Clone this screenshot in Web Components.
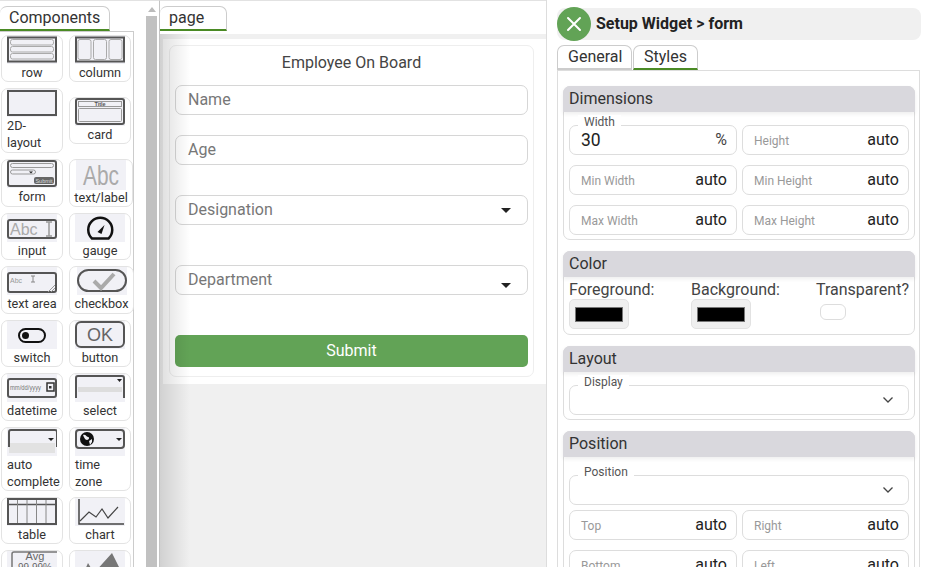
<!DOCTYPE html>
<html><head><meta charset="utf-8"><title>Setup Widget</title>
<style>
html,body{margin:0;padding:0;background:#fff}
body{width:929px;height:567px;overflow:hidden;font-family:Roboto,"Liberation Sans",sans-serif;color:#333}
svg text{font-family:"Liberation Sans",Arial,sans-serif}
</style></head><body>
<app-shell>
  <comp-palette slot="left">
    <comp-tile><svg slot="icon" width="50" height="28" viewBox="0 0 50 28"><rect x="1" y="1.500" width="48" height="24" fill="none" stroke="#555" stroke-width="2"/><g fill="none" stroke="#aaa"><rect x="3.500" y="3.500" width="43" height="5.500" rx="2"/><rect x="3.500" y="10.500" width="43" height="5.500" rx="2"/><rect x="3.500" y="17.500" width="43" height="5.500" rx="2"/></g></svg>row</comp-tile>
    <comp-tile><svg slot="icon" width="50" height="28" viewBox="0 0 50 28"><rect x="1" y="1.500" width="48" height="24" fill="none" stroke="#555" stroke-width="2"/><g fill="none" stroke="#aaa"><rect x="3" y="3.500" width="13" height="20" rx="2"/><rect x="18.500" y="3.500" width="13" height="20" rx="2"/><rect x="34" y="3.500" width="13" height="20" rx="2"/></g></svg>column</comp-tile>
    <comp-tile left pad><svg slot="icon" width="50" height="28" viewBox="0 0 50 28"><rect x="1" y="2" width="48" height="24" fill="none" stroke="#555" stroke-width="2"/></svg>2D-<br>layout</comp-tile>
    <comp-tile><svg slot="icon" width="50" height="28" viewBox="0 0 50 28"><rect x="1" y="1" width="48" height="25" rx="2" fill="none" stroke="#555" stroke-width="2"/><rect x="3.500" y="3.500" width="43" height="5" fill="none" stroke="#999"/><rect x="3.500" y="10.500" width="43" height="13" rx="1" fill="none" stroke="#999"/><text x="25" y="8" font-size="5.500" font-weight="700" text-anchor="middle" fill="#555">Title</text></svg>card</comp-tile>
    <comp-tile><svg slot="icon" width="50" height="28" viewBox="0 0 50 28"><rect x="1" y="1" width="48" height="25" rx="2" fill="none" stroke="#555" stroke-width="2"/><rect x="3.500" y="3.500" width="43" height="4" rx="2" fill="none" stroke="#999"/><rect x="3.500" y="10" width="25" height="4" rx="2" fill="none" stroke="#999"/><path d="M22 11.500h4l-2 2z" fill="#222"/><rect x="27" y="17" width="20" height="7" rx="2" fill="#666"/><text x="37" y="22.500" font-size="5.500" text-anchor="middle" fill="#ddd">Submit</text></svg>form</comp-tile>
    <comp-tile wide="64" abc><svg slot="icon" width="50" height="30" viewBox="0 0 50 30"><text x="25" y="25" font-size="27" text-anchor="middle" textLength="36" lengthAdjust="spacingAndGlyphs" fill="#aaa">Abc</text></svg>text/label</comp-tile>
    <comp-tile><svg slot="icon" width="50" height="28" viewBox="0 0 50 28"><rect x="1" y="6" width="48" height="18" rx="2" fill="none" stroke="#555" stroke-width="2"/><text x="3" y="21" font-size="16" fill="#aaa">Abc</text><path d="M39 8h6M39 22h6M42 8v14" stroke="#999" stroke-width="1.500" fill="none"/></svg>input</comp-tile>
    <comp-tile><svg slot="icon" width="50" height="28" viewBox="0 0 50 28"><path d="M17 24.500a12 12 0 1 1 16.500 0z" fill="none" stroke="#111" stroke-width="2.500" stroke-linejoin="round"/><path d="M22.500 18l7-7-3 9z" fill="#111"/></svg>gauge</comp-tile>
    <comp-tile><svg slot="icon" width="50" height="28" viewBox="0 0 50 28"><rect x="1" y="6" width="48" height="19" rx="2" fill="none" stroke="#555" stroke-width="2"/><text x="3" y="16" font-size="7" fill="#999">Abc</text><path d="M24 9h4M24 15h4M26 9v6" stroke="#888" fill="none"/><path d="M48 18l-7 7M48 21l-4 4" stroke="#999"/></svg>text area</comp-tile>
    <comp-tile wide="65"><svg slot="icon" width="50" height="28" viewBox="0 0 50 28"><rect x="1" y="3" width="48" height="21" rx="10.500" fill="none" stroke="#555" stroke-width="2"/><path d="M17 14l7 7 13-14" fill="none" stroke="#aaa" stroke-width="4"/></svg>checkbox</comp-tile>
    <comp-tile><svg slot="icon" width="50" height="28" viewBox="0 0 50 28"><rect x="12" y="8" width="26" height="13" rx="6.500" fill="none" stroke="#111" stroke-width="2"/><circle cx="18.500" cy="14.500" r="3.500" fill="#111"/></svg>switch</comp-tile>
    <comp-tile><svg slot="icon" width="50" height="28" viewBox="0 0 50 28"><rect x="1" y="1" width="48" height="25" rx="5" fill="none" stroke="#555" stroke-width="2"/><text x="25" y="20" font-size="18" text-anchor="middle" fill="#666">OK</text></svg>button</comp-tile>
    <comp-tile><svg slot="icon" width="50" height="28" viewBox="0 0 50 28"><rect x="1" y="5" width="48" height="18" rx="2" fill="none" stroke="#555" stroke-width="2"/><text x="3" y="16" font-size="6.500" textLength="31" lengthAdjust="spacingAndGlyphs" fill="#777">mm/dd/yyyy</text><rect x="40" y="9" width="7" height="8" fill="none" stroke="#333" stroke-width="1.500"/><rect x="42" y="12" width="2.500" height="2.500" fill="#333"/></svg>datetime</comp-tile>
    <comp-tile><svg slot="icon" width="50" height="28" viewBox="0 0 50 28"><path d="M1 24V4a2 2 0 0 1 2-2h44a2 2 0 0 1 2 2v20" fill="none" stroke="#555" stroke-width="2"/><rect x="3" y="13" width="44" height="5" fill="#ddd"/><path d="M42 5h5l-2.500 3z" fill="#222"/></svg>select</comp-tile>
    <comp-tile left><svg slot="icon" width="50" height="25" viewBox="0 0 50 25"><rect x="2" y="15" width="46" height="10" fill="#e2e2e2"/><path d="M1 19V4a2 2 0 0 1 2-2h44a2 2 0 0 1 2 2v15" fill="none" stroke="#555" stroke-width="2" transform="translate(1 0)"/><path d="M41 10h6l-3 3z" fill="#222"/></svg>auto<br>complete</comp-tile>
    <comp-tile left><svg slot="icon" width="50" height="25" viewBox="0 0 50 25"><rect x="1" y="2" width="48" height="18" rx="3" fill="none" stroke="#555" stroke-width="2"/><circle cx="12" cy="11" r="7" fill="#111"/><path d="M8 7c3-1 3 2 5 2s1 3-1 3-3-3-4-5zM14 13l3-2 0 3-2 3z" fill="#f0f0f5"/><path d="M41 10h6l-3 3z" fill="#222"/></svg>time<br>zone</comp-tile>
    <comp-tile><svg slot="icon" width="50" height="28" viewBox="0 0 50 28"><rect x="1" y="1" width="48" height="25" fill="none" stroke="#555" stroke-width="2"/><path d="M1 6.500h48" stroke="#555" stroke-width="1.500"/><path d="M10.500 2v23M20 2v23M29.500 2v23M39 2v23" stroke="#888"/></svg>table</comp-tile>
    <comp-tile><svg slot="icon" width="50" height="28" viewBox="0 0 50 28"><path d="M4 1v25h45" fill="none" stroke="#444" stroke-width="1.500"/><path d="M5 23l9-9 7 5 6-8 6 9 10-11" fill="none" stroke="#444" stroke-width="1.200"/></svg>chart</comp-tile>
    <comp-tile><svg slot="icon" width="50" height="28" viewBox="0 0 50 28"><rect x="5" y="1" width="48" height="27" rx="2" fill="none" stroke="#777" stroke-width="1.500"/><text x="28" y="9" font-size="11" text-anchor="middle" fill="#666">Avg</text><text x="28" y="20" font-size="10" text-anchor="middle" fill="#666">99.99%</text></svg></comp-tile>
    <comp-tile><svg slot="icon" width="50" height="28" viewBox="0 0 50 28"><path d="M6 28L13 12l6 10L37 2 50 28z" fill="#777"/></svg></comp-tile>
  </comp-palette>
  <form-canvas slot="mid">
    <form-field>Name</form-field>
    <form-field gap="20">Age</form-field>
    <form-field gap="30" arrow="mid">Designation</form-field>
    <form-field gap="40" arrow="low">Department</form-field>
    <submit-button>Submit</submit-button>
  </form-canvas>
  <setup-panel slot="right">
    <setup-section title="Dimensions">
      <dim-grid>
        <dim-field legend="Width" value="30" unit="%"></dim-field><dim-field label="Height" value="auto"></dim-field>
        <dim-field label="Min Width" value="auto"></dim-field><dim-field label="Min Height" value="auto"></dim-field>
        <dim-field label="Max Width" value="auto"></dim-field><dim-field label="Max Height" value="auto"></dim-field>
      </dim-grid>
    </setup-section>
    <setup-section title="Color"><color-row></color-row></setup-section>
    <setup-section title="Layout"><legend-select legend="Display"></legend-select></setup-section>
    <setup-section title="Position" extra>
      <legend-select legend="Position"></legend-select>
      <dim-grid near>
        <dim-field label="Top" value="auto"></dim-field><dim-field label="Right" value="auto"></dim-field>
        <dim-field label="Bottom" value="auto"></dim-field><dim-field label="Left" value="auto"></dim-field>
      </dim-grid>
    </setup-section>
  </setup-panel>
</app-shell>
<script>
function def(name, html){
  class E extends HTMLElement{
    constructor(){super();this.attachShadow({mode:'open'});}
    connectedCallback(){this.shadowRoot.innerHTML=typeof html==='function'?html(this):html;}
  }
  customElements.define(name,E);
}
def('app-shell',`<style>
:host{display:grid;grid-template-columns:160px 386px 1fr;width:929px;height:567px;overflow:hidden}
</style><slot name="left"></slot><slot name="mid"></slot><slot name="right"></slot>`);

def('tab-head',e=>`<style>
:host{display:block;box-sizing:border-box;height:25px;width:${e.getAttribute('w')}px;border:1px solid #ccc;border-left:${e.hasAttribute('flat')?'0':'1px solid #ccc'};border-bottom:2px solid ${e.hasAttribute('off')?'#ccc':'#4a8a24'};border-radius:7px 7px 0 0;font:16px/22px Roboto,sans-serif;color:#333;padding-left:${e.getAttribute('pad')}px;background:#fff}
</style><slot></slot>`);

def('comp-palette',`<style>
:host{display:flex;height:567px;box-sizing:border-box;border-top:1px solid #e2e2e2;overflow:hidden}
.col{width:134px;flex:none;padding-top:5px;box-sizing:border-box}
.grid{box-sizing:border-box;width:134px;height:600px;border-top:1px solid #ccc;border-right:1px solid #ccc;padding:2.600px 0 0 1px;display:grid;grid-template-columns:62px 62px;gap:6px;align-items:center;align-content:start}
.sb{margin-left:12px;width:11px;display:flex;flex-direction:column;align-items:center}
.ar{width:0;height:0;border:4px solid transparent;border-top:0;border-bottom:5px solid #bbb;margin-top:6px}
.th{margin-top:4px;width:11px;flex:1;background:#c1c1c1}
</style><div class="col"><tab-head w="110" flat pad="9">Components</tab-head><div class="grid"><slot></slot></div></div><div class="sb"><div class="ar"></div><div class="th"></div></div>`);

def('comp-tile',e=>{
  const left=e.hasAttribute('left'),abc=e.hasAttribute('abc'),w=e.getAttribute('wide')||62;
  return `<style>
:host{display:flex;flex-direction:column;align-items:${left?'flex-start':'center'};box-sizing:border-box;min-height:${left?64:47.500}px;width:${w}px;margin:${abc?'-1px 0':'0'};border:1px solid #e3e3e3;border-radius:7px;padding:0 5px ${e.hasAttribute('pad')?1:0}px;font:12.700px/${left?17:16.500}px Roboto,sans-serif;color:#333;white-space:nowrap}
.i{display:block;background:#f1f1f6;height:${abc?30:28}px;width:50px;line-height:0;margin-bottom:${abc||left?0:1}px}
::slotted(svg){display:block;background:#f1f1f6}
.t{display:block;margin:${left?'0':'0 -3px'}}
</style><span class="i"><slot name="icon"></slot></span><span class="t"><slot></slot></span>`});

def('form-canvas',`<style>
:host{display:flex;flex-direction:column;position:relative;height:567px;border-top:1px solid #e2e2e2;box-sizing:border-box;background:#f0f0f0;border-left:1px solid #c4c4c4;margin-left:-1px}
.top{background:#fff;padding:5px 0 3px;height:33px;box-sizing:border-box}
.panel{margin-left:3px;margin-top:5px;background:#fff;height:345px;padding:6px 12px 0 6px;box-sizing:border-box}
.card{box-sizing:border-box;height:332px;border:1px solid #eee;border-radius:7px;padding:0 5px;display:flex;flex-direction:column}
h1{font:400 16px/19px Roboto,sans-serif;color:#444;text-align:center;margin:7px 0 13px}
.fade{position:absolute;left:0;top:33px;bottom:0;width:30px;background:linear-gradient(90deg,rgba(0,0,0,.13),rgba(0,0,0,0));pointer-events:none}
</style><div class="top"><tab-head w="67" flat pad="9">page</tab-head></div><div class="panel"><div class="card"><h1>Employee On Board</h1><slot></slot></div></div><div class="fade"></div>`);

def('form-field',e=>{
  const a=e.getAttribute('arrow');
  return `<style>
:host{display:flex;align-items:center;justify-content:space-between;box-sizing:border-box;height:30px;margin-top:${e.getAttribute('gap')||0}px;border:1px solid #d6d6d6;border-radius:7px;padding:0 16px 0 12px;font:16px/18px Roboto,sans-serif;color:#777}
.a{width:0;height:0;border:5px solid transparent;border-bottom:0;border-top:5px solid #222;position:relative;top:${a==='low'?5:0}px;display:${a?'block':'none'}}
</style><span class="t"><slot></slot></span><span class="a"></span>`});

def('submit-button',`<style>
:host{display:block;box-sizing:border-box;height:32px;margin-top:40px;background:#62a356;border-radius:5px;color:#fff;font:16px/31px Roboto,sans-serif;text-align:center}
</style><slot></slot>`);

def('setup-panel',`<style>
:host{display:block;height:567px;box-sizing:border-box;border-left:1px solid #ddd;padding:8px 8px 0 10px;overflow:hidden}
.h{display:flex;align-items:center;height:32px;background:#f0f0f0;border-radius:8px;gap:5px;font:700 16px/20px Roboto,sans-serif;color:#222}
.x{width:34px;height:34px;border-radius:50%;background:#62a356;display:flex;align-items:center;justify-content:center;margin-top:-1px;flex:none}
.tabs{display:flex;gap:1px;margin-top:5px;height:25px}
.b{box-sizing:border-box;width:363px;height:600px;border:1px solid #ddd;padding:15px 5px 0 5px}
</style><div class="h"><span class="x"><svg width="16" height="16" viewBox="0 0 16 16"><path d="M2 2l12 12M14 2L2 14" stroke="#fff" stroke-width="2" stroke-linecap="round"/></svg></span><span>Setup Widget &gt; form</span></div><div class="tabs"><tab-head w="75" off pad="10">General</tab-head><tab-head w="65" pad="10">Styles</tab-head></div><div class="b"><slot></slot></div>`);

def('setup-section',e=>`<style>
:host{display:block;box-sizing:border-box;border:1px solid #ddd;border-radius:7px;margin-bottom:11px;width:352px;padding-bottom:4px}
.h{height:26px;margin:-1px -1px 0;background:#d9d8dd;border-radius:7px 7px 0 0;box-shadow:0 2px 4px rgba(0,0,0,.07);font:16px/25px Roboto,sans-serif;color:#333;padding-left:6px}
.b{padding:${e.hasAttribute('extra')?18:13}px 5px 0 5px}
</style><div class="h">${e.getAttribute('title')}</div><div class="b"><slot></slot></div>`);

def('dim-grid',e=>`<style>
:host{display:grid;grid-template-columns:168px 167px;column-gap:5px;row-gap:10px;margin-top:${e.hasAttribute('near')?5:0}px}
</style><slot></slot>`);

def('dim-field',e=>{
  const lg=e.getAttribute('legend'),lb=e.getAttribute('label'),v=e.getAttribute('value'),u=e.getAttribute('unit');
  return `<style>
:host{display:flex;align-items:center;justify-content:space-between;box-sizing:border-box;height:30px;border:1px solid #ddd;border-radius:7px;padding:0 9px 0 11px;position:relative;font:16px/18px Roboto,sans-serif;color:#222}
.l{font-size:12px;color:#999;padding-top:2px}
.lg{position:absolute;left:8px;top:-11px;background:#fff;padding:0 6px;font:12px/14px Roboto,sans-serif;color:#555}
.u{font-size:16px;color:#444}
.v{font-size:17.500px}
</style>${lg?`<span class="lg">${lg}</span><span class="v">${v}</span><span class="u">${u}</span>`:`<span class="l">${lb}</span><span>${v}</span>`}`});

def('legend-select',e=>`<style>
:host{display:flex;align-items:center;justify-content:flex-end;box-sizing:border-box;height:30px;width:340px;border:1px solid #ddd;border-radius:7px;padding-right:14px;position:relative}
.lg{position:absolute;left:8px;top:-11px;background:#fff;padding:0 6px;font:12px/14px Roboto,sans-serif;color:#555}
</style><span class="lg">${e.getAttribute('legend')}</span><svg width="12" height="8" viewBox="0 0 12 8"><path d="M1.500 1.500L6 6l4.500-4.500" fill="none" stroke="#444" stroke-width="1.300"/></svg>`);

def('color-row',`<style>
:host{display:grid;grid-template-columns:122px 125px auto;font:16px/20px Roboto,sans-serif;color:#444;margin:-10px 0 0 0;height:50px}
.s{display:flex;align-items:center;justify-content:center;box-sizing:border-box;width:60px;height:30px;margin-top:-1px;background:#efefef;border:1px solid #e2e2e2;border-radius:5px}
.s i{display:block;box-sizing:border-box;width:48px;height:15px;background:#000;border:1px solid #777}
.c{box-sizing:border-box;width:26px;height:16px;margin:4px 0 0 4px;border:1px solid #ddd;border-radius:6px}
</style><div>Foreground:<div class="s"><i></i></div></div><div>Background:<div class="s"><i></i></div></div><div>Transparent?<div class="c"></div></div>`);
</script>
</body></html>
